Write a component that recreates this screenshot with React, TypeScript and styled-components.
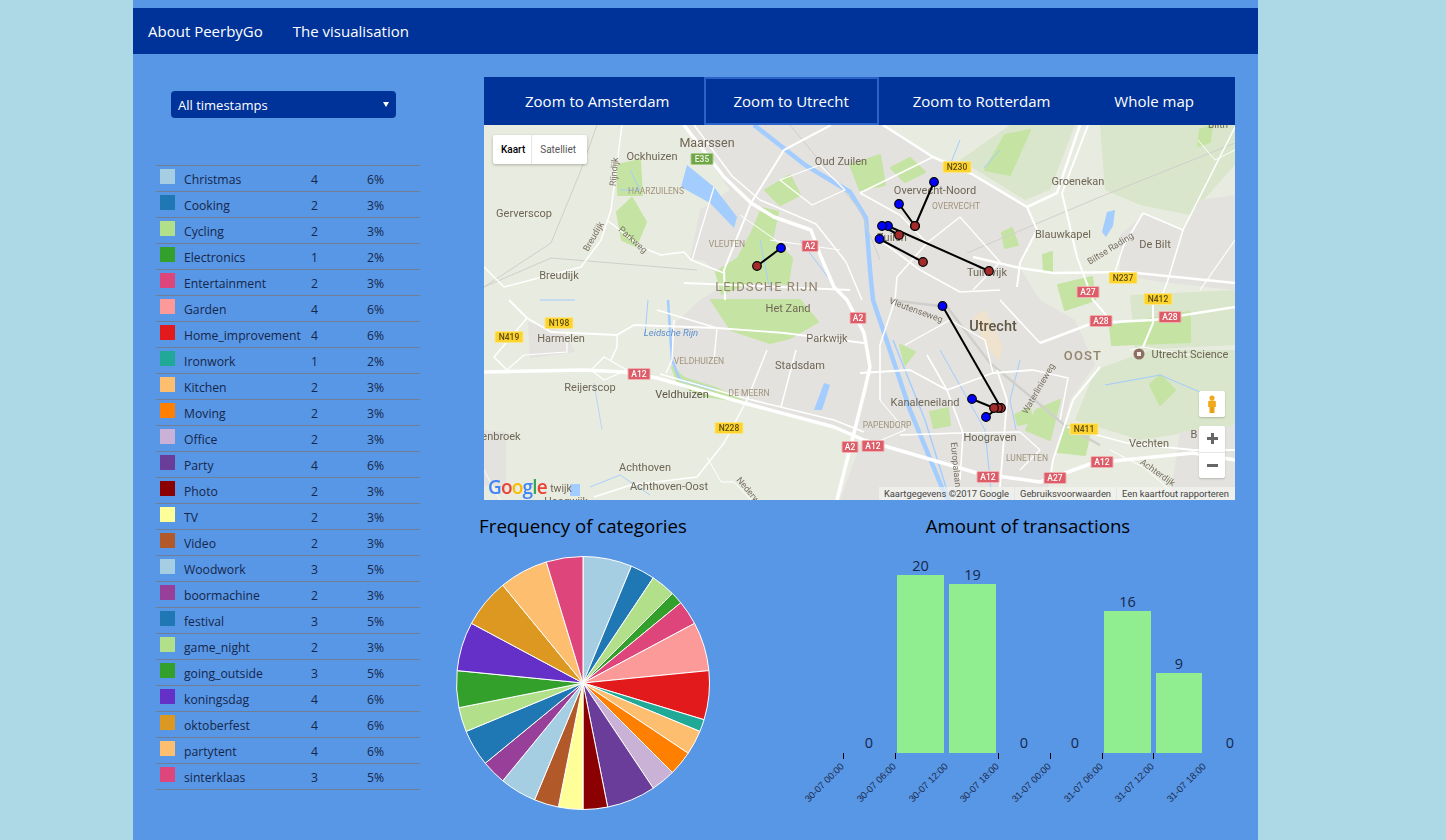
import React from 'react';
import styled, { createGlobalStyle } from 'styled-components';

const FONT = `'Open Sans', 'Noto Sans', sans-serif`;
const INK = '#16264a';

const CATEGORIES = [
    { name: 'Christmas', count: 4, share: 6, colour: '#a6cee3' },
    { name: 'Cooking', count: 2, share: 3, colour: '#1f78b4' },
    { name: 'Cycling', count: 2, share: 3, colour: '#b2df8a' },
    { name: 'Electronics', count: 1, share: 2, colour: '#33a02c' },
    { name: 'Entertainment', count: 2, share: 3, colour: '#de467b' },
    { name: 'Garden', count: 4, share: 6, colour: '#fb9a99' },
    { name: 'Home_improvement', count: 4, share: 6, colour: '#e31a1c' },
    { name: 'Ironwork', count: 1, share: 2, colour: '#1fa996' },
    { name: 'Kitchen', count: 2, share: 3, colour: '#fdbf6f' },
    { name: 'Moving', count: 2, share: 3, colour: '#ff7f00' },
    { name: 'Office', count: 2, share: 3, colour: '#cab2d6' },
    { name: 'Party', count: 4, share: 6, colour: '#6a3d9a' },
    { name: 'Photo', count: 2, share: 3, colour: '#8b0000' },
    { name: 'TV', count: 2, share: 3, colour: '#ffff99' },
    { name: 'Video', count: 2, share: 3, colour: '#b15928' },
    { name: 'Woodwork', count: 3, share: 5, colour: '#a6cee3' },
    { name: 'boormachine', count: 2, share: 3, colour: '#984099' },
    { name: 'festival', count: 3, share: 5, colour: '#1f78b4' },
    { name: 'game_night', count: 2, share: 3, colour: '#b2df8a' },
    { name: 'going_outside', count: 3, share: 5, colour: '#33a02c' },
    { name: 'koningsdag', count: 4, share: 6, colour: '#6530c8' },
    { name: 'oktoberfest', count: 4, share: 6, colour: '#dc9820' },
    { name: 'partytent', count: 4, share: 6, colour: '#fdbf6f' },
    { name: 'sinterklaas', count: 3, share: 5, colour: '#de467b' },
];

// map shapes are written in page pixels, the svg viewBox maps them onto the panel
const CITY_AREAS: string[] = [
    'M684 125 L883 125 L933 157 L970 173 L1027 207 L1037 230 L1020 268 L1040 300 L1075 320 L1095 365 L1070 400 L1052 470 L1045 500 L840 500 L862 440 L830 425 L744 403 L700 385 L672 372 L668 330 L700 300 L724 285 L706 262 L690 258 L700 210 L730 190 Z',
    'M1120 235 L1145 214 L1184 230 L1200 200 L1235 195 L1235 290 L1160 282 L1120 275 Z',
    'M484 430 L506 432 L506 490 L484 485 Z',
    'M528 322 L565 332 L575 352 L530 358 Z',
    'M1180 432 L1235 425 L1235 500 L1170 500 Z',
];

const SOFT_GREENS: string[] = [
    'M1100 125 L1235 125 L1235 165 L1190 215 L1140 205 L1105 190 Z',
    'M960 160 L1010 125 L1075 125 L1050 190 L1025 200 Z',
    'M1095 370 L1150 350 L1235 350 L1235 425 L1140 440 L1075 420 Z',
    'M1130 295 L1235 290 L1235 345 L1135 350 Z',
];

const GREENS: string[] = [
    'M752 232 L762 208 L778 212 L772 240 L792 258 L788 284 L750 282 L722 294 L716 272 L738 258 Z',
    'M711 300 L800 300 L818 322 L790 338 L770 343 L731 330 Z',
    'M617 212 L632 198 L646 222 L636 246 L622 240 Z',
    'M617 165 L640 160 L642 195 L618 195 Z',
    'M672 367 L684 378 L716 388 L745 402 L705 396 L678 384 Z',
    'M891 168 L910 158 L925 172 L905 182 Z',
    'M985 170 L1005 135 L1030 130 L1010 175 Z',
    'M1110 326 L1190 312 L1190 342 L1112 345 Z',
    'M1036 410 L1060 400 L1050 440 L1026 430 Z',
    'M1064 425 L1090 432 L1085 455 L1058 452 Z',
    'M1150 385 L1160 375 L1175 390 L1160 405 Z',
    'M1002 233 L1012 228 L1018 245 L1005 248 Z',
    'M1043 255 L1052 252 L1052 272 L1044 272 Z',
    'M1058 285 L1092 277 L1095 300 L1065 310 Z',
    'M900 345 L915 352 L905 365 Z',
    'M930 412 L948 408 L950 425 L934 428 Z',
    'M1015 415 L1030 408 L1032 422 L1018 425 Z',
    'M1200 130 L1212 125 L1210 142 L1198 146 Z',
    'M765 190 L790 175 L800 195 L780 205 Z',
    'M850 165 L880 155 L885 185 L860 190 Z',
];

const WATERS: string[] = [
    'M681 187 L687 165 L714 187 L737 217 L734 228 L710 203 Z',
    'M1102 232 L1107 212 L1115 210 L1113 226 L1106 237 Z',
    'M824 383 L830 385 L822 410 L814 410 Z',
    'M570 484 L580 484 L580 496 L570 496 Z',
    'M1010 320 L1010 320 Z',
];

const CANALS: [string, number][] = [
    ['M754 125 L805 165 L850 192 L866 218 L870 270 L873 300 L910 410 L943 490 L948 500', 4.5],
    ['M668 300 L672 360 L680 380 L716 390', 2.5],
    ['M594 383 L602 430', 0.7],
    ['M893 340 L925 420 L950 500', 1.4],
    ['M940 350 L985 430 L992 500', 1],
    ['M1105 385 L1160 375 L1200 392', 1],
    ['M590 487 L620 475 L650 495', 0.9],
    ['M540 300 L575 300', 1],
    ['M648 300 L645 335', 1],
    ['M620 190 L640 190 L630 170', 1],
    ['M760 240 L770 290', 1],
    ['M800 240 L830 280', 1],
    ['M1020 360 L1010 400 L1016 430', 1],
    ['M960 140 L950 165', 1],
    ['M984 168 L1000 150', 1],
];

const RAILS: [string, number][] = [
    ['M597 125 L581 170 L551 243 L484 287', 1],
    ['M484 287 L551 258 L697 270', 1],
    ['M967 253 L1100 197 L1235 143', 1],
    ['M890 300 L947 307 L990 363 L1067 427 L1100 445', 2.5],
    ['M790 125 L860 210 L880 260', 1],
];

const ROADS: [string, number][] = [
    // A12
    ['M484 372 L584 370 L624 372 L657 378 L744 403 L834 427 L864 440 L977 473 L1040 482 L1093 463 L1193 453 L1235 460', 3.5],
    ['M660 374 L744 398 L834 420 L864 432', 1.5],
    // A2
    ['M684 125 L724 177 L751 203 L774 217 L811 230 L821 257 L834 287 L847 300 L864 333 L870 367 L864 393 L837 500', 3.5],
    ['M694 125 L732 176 L760 200 L816 224 L846 262 L862 300', 1.5],
    // ring and provincial roads
    ['M831 125 L784 150 L751 203 L724 270 L725 300', 2],
    ['M883 125 L933 157 L970 173 L1027 207 L1057 193 L1080 125', 2.5],
    ['M1088 125 L1062 193 L1077 257 L1093 300 L1113 323', 2],
    ['M933 157 L860 193', 1.6],
    ['M1027 207 L1037 230 L1020 263 L1017 287', 2],
    ['M973 257 L1020 268 L1053 273 L1127 272 L1235 283', 2.5],
    ['M1040 343 L1093 323 L1153 320 L1235 307', 2.5],
    ['M1153 300 L1153 323 L1143 347', 2],
    ['M1100 367 L1073 400 L1053 460 L1050 480', 2],
    ['M1067 427 L1127 443 L1193 450 L1235 450', 1.8],
    ['M1235 127 L1183 230 L1167 283 L1160 300', 1.6],
    ['M1143 213 L1183 230', 1.6],
    ['M1143 213 L1123 247 L1115 272', 1.6],
    ['M1235 240 L1200 290', 1.2],
    // west of the city
    ['M622 125 L611 210 L601 240 L581 267 L504 287 L484 267', 1.5],
    ['M607 220 L641 247 L661 255 L684 252 L691 260 L724 273', 1.5],
    ['M714 187 L701 230 L692 260', 1.3],
    ['M684 283 L850 290', 1.8],
    ['M509 300 L527 318 L551 332 L617 335 L634 325 L717 328 L784 333 L864 343', 1.8],
    ['M527 318 L494 357 L507 370', 1.5],
    ['M507 370 L524 355 L567 352 L567 333', 1.2],
    ['M617 335 L617 347 L611 360', 1.5],
    ['M591 370 L604 357 L627 370 L604 380 Z', 1.3],
    ['M674 320 L672 360 L666 373', 1.4],
    ['M657 310 L717 328 L714 360', 1.4],
    ['M767 350 L747 400 L724 443 L697 477 L631 485 L594 497', 1.5],
    ['M707 457 L721 482 L734 482 L751 500', 1],
    ['M796 350 L781 407', 1.5],
    ['M484 470 L500 500', 0.8],
    // city grid
    ['M860 193 L900 215 L927 243 L960 217', 1.5],
    ['M927 243 L897 277 L895 300 L880 345 L880 400', 1.6],
    ['M960 217 L1000 262 L973 290', 1.4],
    ['M880 240 L920 270 L960 292 L1000 290', 1.6],
    ['M860 373 L910 370 L947 390 L993 373 L1033 370', 1.8],
    ['M927 355 L947 390 L963 433 L960 480', 1.6],
    ['M997 370 L1007 400 L1000 487', 1.8],
    ['M905 345 L950 320 L985 340 L993 373', 1.4],
    ['M900 435 L960 433 L1020 432 L1040 450 L1020 470', 1.3],
    ['M1033 370 L1068 378 L1060 420', 1.4],
    ['M1000 300 L1040 343', 1.6],
    ['M880 400 L905 430 L870 445', 1.1],
    ['M780 180 L820 165 L845 190 L812 205 Z', 1.3],
    ['M770 240 L840 250', 1],
    ['M740 215 L790 250', 1],
    ['M1198 140 L1215 160 L1235 150', 1],
    ['M1130 350 L1143 347 L1190 355', 1],
    ['M1110 450 L1145 468 L1170 490', 1],
];

const MAP_LABELS = [
    { x: 707, y: 147, text: 'Maarssen', size: 12.5, colour: '#6f6656' },
    { x: 652, y: 160, text: 'Ockhuizen', size: 11, colour: '#6f6656' },
    { x: 841, y: 165, text: 'Oud Zuilen', size: 11, colour: '#6f6656' },
    { x: 656, y: 194, text: 'HAARZUILENS', size: 8.5, colour: '#a1937d' },
    { x: 524, y: 217, text: 'Gerverscop', size: 11, colour: '#6f6656' },
    { x: 559, y: 279, text: 'Breudijk', size: 11, colour: '#6f6656' },
    { x: 727, y: 247, text: 'VLEUTEN', size: 8.5, colour: '#a1937d' },
    { x: 767, y: 291, text: 'LEIDSCHE RIJN', size: 13, colour: '#94856c', spacing: 1 },
    { x: 788, y: 312, text: 'Het Zand', size: 11, colour: '#6f6656' },
    { x: 561, y: 342, text: 'Harmelen', size: 11, colour: '#6f6656' },
    { x: 671, y: 336, text: 'Leidsche Rijn', size: 9.5, colour: '#5d8fd0', italic: true },
    { x: 827, y: 342, text: 'Parkwijk', size: 11, colour: '#6f6656' },
    { x: 699, y: 364, text: 'VELDHUIZEN', size: 8.5, colour: '#a1937d' },
    { x: 800, y: 369, text: 'Stadsdam', size: 11, colour: '#6f6656' },
    { x: 590, y: 391, text: 'Reijerscop', size: 11, colour: '#6f6656' },
    { x: 682, y: 398, text: 'Veldhuizen', size: 11, colour: '#5f5747' },
    { x: 749, y: 396, text: 'DE MEERN', size: 8.5, colour: '#a1937d' },
    { x: 501, y: 440, text: 'enbroek', size: 11, colour: '#6f6656' },
    { x: 645, y: 471, text: 'Achthoven', size: 11, colour: '#6f6656' },
    { x: 669, y: 490, text: 'Achthoven-Oost', size: 11, colour: '#6f6656' },
    { x: 561, y: 492, text: 'twijk', size: 10.5, colour: '#6f6656' },
    { x: 566, y: 505, text: 'Hoogwijk', size: 10.5, colour: '#6f6656' },
    { x: 935, y: 194, text: 'Overvecht-Noord', size: 11, colour: '#6f6656' },
    { x: 956, y: 209, text: 'OVERVECHT', size: 8.5, colour: '#a1937d' },
    { x: 1078, y: 185, text: 'Groenekan', size: 11, colour: '#6f6656' },
    { x: 1063, y: 238, text: 'Blauwkapel', size: 11, colour: '#6f6656' },
    { x: 1155, y: 248, text: 'De Bilt', size: 11, colour: '#6f6656' },
    { x: 892, y: 241, text: 'Zuilen', size: 11, colour: '#6f6656' },
    { x: 987, y: 276, text: 'Tuinwijk', size: 11, colour: '#6f6656' },
    { x: 993, y: 331, text: 'Utrecht', size: 14.5, colour: '#5f5747', bold: true },
    { x: 1083, y: 360, text: 'OOST', size: 13, colour: '#94856c', spacing: 1.2, bold: true },
    { x: 1190, y: 358, text: 'Utrecht Science', size: 11, colour: '#6f6656' },
    { x: 925, y: 406, text: 'Kanaleneiland', size: 11, colour: '#6f6656' },
    { x: 887, y: 428, text: 'PAPENDORP', size: 8.5, colour: '#a1937d' },
    { x: 990, y: 441, text: 'Hoograven', size: 11, colour: '#6f6656' },
    { x: 1027, y: 461, text: 'LUNETTEN', size: 8.5, colour: '#a1937d' },
    { x: 1149, y: 447, text: 'Vechten', size: 11, colour: '#6f6656' },
    { x: 1194, y: 438, text: 'B', size: 11, colour: '#6f6656' },
    { x: 1218, y: 128, text: 'Bilth', size: 10, colour: '#6f6656' },
];

const ROAD_LABELS = [
    { x: 617, y: 172, angle: -85, text: 'Rijndijk' },
    { x: 596, y: 238, angle: -60, text: 'Breudijk' },
    { x: 631, y: 242, angle: 42, text: 'Parkweg' },
    { x: 1112, y: 251, angle: -32, text: 'Biltse Rading' },
    { x: 915, y: 313, angle: 20, text: 'Vleutenseweg' },
    { x: 1041, y: 390, angle: -60, text: 'Waterlinieweg' },
    { x: 953, y: 465, angle: 84, text: 'Europalaan' },
    { x: 1156, y: 475, angle: 35, text: 'Achterdijk' },
    { x: 746, y: 492, angle: 50, text: 'Nederw' },
];

const SHIELDS = [
    { x: 702, y: 159, text: 'E35', kind: 'green' },
    { x: 810, y: 246, text: 'A2', kind: 'red' },
    { x: 858, y: 318, text: 'A2', kind: 'red' },
    { x: 850, y: 447, text: 'A2', kind: 'red' },
    { x: 873, y: 446, text: 'A12', kind: 'red' },
    { x: 639, y: 374, text: 'A12', kind: 'red' },
    { x: 988, y: 477, text: 'A12', kind: 'red' },
    { x: 1102, y: 462, text: 'A12', kind: 'red' },
    { x: 1055, y: 478, text: 'A27', kind: 'red' },
    { x: 1088, y: 292, text: 'A27', kind: 'red' },
    { x: 1101, y: 321, text: 'A28', kind: 'red' },
    { x: 1170, y: 317, text: 'A28', kind: 'red' },
    { x: 957, y: 167, text: 'N230', kind: 'yellow' },
    { x: 1123, y: 278, text: 'N237', kind: 'yellow' },
    { x: 1158, y: 299, text: 'N412', kind: 'yellow' },
    { x: 1084, y: 429, text: 'N411', kind: 'yellow' },
    { x: 729, y: 428, text: 'N228', kind: 'yellow' },
    { x: 559, y: 323, text: 'N198', kind: 'yellow' },
    { x: 509, y: 337, text: 'N419', kind: 'yellow' },
];

const SHIELD_COLOURS: Record<string, [string, string, string]> = {
    green: ['#6ea544', '#a9cc8d', '#eef5e6'],
    red: ['#dc5d67', '#f0b0b4', '#ffffff'],
    yellow: ['#fdd42f', '#fbe58c', '#5c4b10'],
};

const ROUTES = [
    { from: [781, 248], to: [757, 266] },
    { from: [934, 182], to: [915, 226] },
    { from: [899, 204], to: [915, 226] },
    { from: [888, 226], to: [989, 271] },
    { from: [882, 226], to: [899, 235] },
    { from: [879.5, 239], to: [923, 262] },
    { from: [942.5, 306], to: [1001, 408] },
    { from: [986, 417], to: [998, 408] },
    { from: [972, 399], to: [994, 408] },
];

const BARS = [
    { x: 897, y: 575, width: 47, value: 20 },
    { x: 949, y: 584, width: 47, value: 19 },
    { x: 1104, y: 611, width: 47, value: 16 },
    { x: 1156, y: 673, width: 46, value: 9 },
];

const ZERO_LABELS = [869, 1024, 1075, 1230];

const TICKS = [
    { x: 843.5, text: '30-07 00:00', mark: true },
    { x: 895.5, text: '30-07 06:00', mark: true },
    { x: 947.5, text: '30-07 12:00', mark: false },
    { x: 998.5, text: '30-07 18:00', mark: true },
    { x: 1050.5, text: '31-07 00:00', mark: true },
    { x: 1102.5, text: '31-07 06:00', mark: true },
    { x: 1153.5, text: '31-07 12:00', mark: true },
    { x: 1205.5, text: '31-07 18:00', mark: false },
];

const slicePath = (start: number, end: number) => {
    const [cx, cy, r] = [583, 683, 126.5];
    const point = (turn: number) => {
        const a = turn * 2 * Math.PI;
        return `${(cx + r * Math.sin(a)).toFixed(2)} ${(cy - r * Math.cos(a)).toFixed(2)}`;
    };
    return `M${cx} ${cy} L${point(start)} A${r} ${r} 0 0 1 ${point(end)} Z`;
};

const PieChart: React.FC = () => {
    const total = CATEGORIES.reduce((sum, c) => sum + c.count, 0);
    let turned = 0;
    return (
        <PieDrawing viewBox="440 545 286 270">
            {CATEGORIES.map(category => {
                const start = turned;
                turned += category.count / total;
                return (
                    <path
                        key={category.name}
                        d={slicePath(start, turned)}
                        fill={category.colour}
                        stroke="#fff"
                        strokeWidth="1"
                    />
                );
            })}
        </PieDrawing>
    );
};

const BarChart: React.FC = () => (
    <BarDrawing viewBox="800 545 456 270">
        {BARS.map(bar => (
            <g key={bar.x}>
                <rect x={bar.x} y={bar.y} width={bar.width} height={753 - bar.y} fill="#90ee90" />
                <BarValue x={bar.x + bar.width / 2} y={bar.y - 4}>{bar.value}</BarValue>
            </g>
        ))}
        {ZERO_LABELS.map(x => (
            <BarValue key={x} x={x} y={748}>0</BarValue>
        ))}
        {TICKS.map(tick => (
            <g key={tick.text}>
                {tick.mark ? <line x1={tick.x} x2={tick.x} y1="753" y2="759" stroke="#000" /> : null}
                <TickLabel
                    x={tick.x + 1}
                    y={767}
                    transform={`rotate(-45 ${tick.x + 1} 767)`}
                >
                    {tick.text}
                </TickLabel>
            </g>
        ))}
    </BarDrawing>
);

const MapDrawing: React.FC = () => (
    <MapSvg viewBox="484 125 751 375">
        <defs>
            <filter id="soft">
                <feGaussianBlur stdDeviation="0.5" />
            </filter>
            <filter id="softer">
                <feGaussianBlur stdDeviation="0.25" />
            </filter>
        </defs>
        <rect x="484" y="125" width="751" height="375" fill="#e8ebdf" />
        <g filter="url(#soft)">
            {SOFT_GREENS.map(d => <path key={d} d={d} fill="#d9e6cb" />)}
            {CITY_AREAS.map(d => <path key={d} d={d} fill="#e3e2df" />)}
            <path d="M973 317 L985 310 L1002 345 L1000 362 L985 345 Z" fill="#f0e3cd" />
            <path d="M1150 327 L1160 325 L1160 340 L1148 340 Z" fill="#f7dfe3" />
            {GREENS.map(d => <path key={d} d={d} fill="#c5e4a3" strokeLinejoin="round" stroke="#c5e4a3" strokeWidth="2" />)}
            {WATERS.map(d => <path key={d} d={d} fill="#a3ccff" />)}
            {CANALS.map(([d, width]) => (
                <path key={d} d={d} fill="none" stroke="#a3ccff" strokeWidth={width} />
            ))}
            {RAILS.map(([d, width]) => (
                <path key={d} d={d} fill="none" stroke="#cfcfcb" strokeWidth={width} />
            ))}
            {ROADS.map(([d, width]) => (
                <path key={d} d={d} fill="none" stroke="#fff" strokeWidth={width} strokeLinejoin="round" />
            ))}
        </g>
        <g filter="url(#softer)">
            {MAP_LABELS.map(label => (
                <MapLabel
                    key={label.text + label.x}
                    x={label.x}
                    y={label.y}
                    fontSize={label.size}
                    fill={label.colour}
                    fontStyle={label.italic ? 'italic' : 'normal'}
                    fontWeight={label.bold ? 500 : 400}
                    letterSpacing={label.spacing ?? 0}
                >
                    {label.text}
                </MapLabel>
            ))}
            {ROAD_LABELS.map(label => (
                <MapLabel
                    key={label.text}
                    x={label.x}
                    y={label.y}
                    fontSize="9"
                    fill="#7a7164"
                    transform={`rotate(${label.angle} ${label.x} ${label.y})`}
                >
                    {label.text}
                </MapLabel>
            ))}
            {SHIELDS.map(shield => {
                const [fill, edge, ink] = SHIELD_COLOURS[shield.kind];
                const width = shield.text.length * 6 + 4;
                return (
                    <g key={shield.text + shield.x}>
                        <rect
                            x={shield.x - width / 2}
                            y={shield.y - 5.5}
                            width={width}
                            height="11"
                            rx="1"
                            fill={fill}
                            stroke={edge}
                        />
                        <MapLabel x={shield.x} y={shield.y + 3} fontSize="8.5" fontWeight={500} fill={ink}>
                            {shield.text}
                        </MapLabel>
                    </g>
                );
            })}
            <circle cx="1139" cy="354" r="5.5" fill="#8d6e63" />
            <rect x="1137" y="352" width="4" height="4" fill="#f5eee8" />
            <GoogleMark x="488" y="494">
                <tspan fill="#4285f4">G</tspan>
                <tspan fill="#ea4335">o</tspan>
                <tspan fill="#fbbc05">o</tspan>
                <tspan fill="#4285f4">g</tspan>
                <tspan fill="#34a853">l</tspan>
                <tspan fill="#ea4335">e</tspan>
            </GoogleMark>
        </g>
        {ROUTES.map(route => (
            <line
                key={route.from.join()}
                x1={route.from[0]}
                y1={route.from[1]}
                x2={route.to[0]}
                y2={route.to[1]}
                stroke="#000"
                strokeWidth="2"
            />
        ))}
        {ROUTES.map(route => (
            <g key={route.to.join() + route.from.join()}>
                <circle cx={route.to[0]} cy={route.to[1]} r="4.3" fill="#a52a2a" stroke="#000" strokeWidth="1.2" />
                <circle cx={route.from[0]} cy={route.from[1]} r="4.3" fill="#0000ff" stroke="#000" strokeWidth="1.2" />
            </g>
        ))}
    </MapSvg>
);

export default function App() {
    return (
        <>
            <GlobalStyle />
            <Page>
                <NavBar>
                    <NavLink>About PeerbyGo</NavLink>
                    <NavLink>The visualisation</NavLink>
                </NavBar>
                <Content>
                    <Sidebar>
                        <TimeSelect>All timestamps</TimeSelect>
                        <Legend>
                            {CATEGORIES.map(category => (
                                <LegendRow key={category.name}>
                                    <Swatch $colour={category.colour} />
                                    <span>{category.name}</span>
                                    <span>{category.count}</span>
                                    <span>{category.share}%</span>
                                </LegendRow>
                            ))}
                        </Legend>
                    </Sidebar>
                    <MainColumn>
                        <MapPanel>
                            <ZoomTabs>
                                <ZoomTab>Zoom to Amsterdam</ZoomTab>
                                <ZoomTab $active>Zoom to Utrecht</ZoomTab>
                                <ZoomTab>Zoom to Rotterdam</ZoomTab>
                                <ZoomTab>Whole map</ZoomTab>
                            </ZoomTabs>
                            <MapFrame>
                                <MapDrawing />
                                <MapTypeControl>
                                    <MapType $selected>Kaart</MapType>
                                    <MapType>Satelliet</MapType>
                                </MapTypeControl>
                                <MapButtons>
                                    <PegmanButton>
                                        <svg width="12" height="19" viewBox="0 0 14 22">
                                            <circle cx="7" cy="3.5" r="3" fill="#f0a81c" />
                                            <path d="M2.5 8 Q2.5 6.5 4 6.5 H10 Q11.5 6.5 11.5 8 V14 H10 V21 H4 V14 H2.5 Z" fill="#f0a81c" />
                                            <path d="M7 14 V21" stroke="#c98a10" strokeWidth="0.8" />
                                        </svg>
                                    </PegmanButton>
                                    <ZoomButtons>
                                        <ZoomButton>
                                            <svg width="11" height="11" viewBox="0 0 11 11"><path d="M4 0h3v4h4v3H7v4H4V7H0V4h4z" fill="#666" /></svg>
                                        </ZoomButton>
                                        <ZoomButton>
                                            <svg width="11" height="3" viewBox="0 0 11 3"><path d="M0 0h11v3H0z" fill="#666" /></svg>
                                        </ZoomButton>
                                    </ZoomButtons>
                                </MapButtons>
                                <Attribution>
                                    <AttributionItem>Kaartgegevens ©2017 Google</AttributionItem>
                                    <AttributionItem>Gebruiksvoorwaarden</AttributionItem>
                                    <AttributionItem>Een kaartfout rapporteren</AttributionItem>
                                </Attribution>
                            </MapFrame>
                        </MapPanel>
                        <ChartRow>
                            <PieColumn>
                                <ChartTitle>Frequency of categories</ChartTitle>
                                <PieChart />
                            </PieColumn>
                            <BarColumn>
                                <ChartTitle>Amount of transactions</ChartTitle>
                                <BarChart />
                            </BarColumn>
                        </ChartRow>
                    </MainColumn>
                </Content>
            </Page>
        </>
    );
}

const GlobalStyle = createGlobalStyle`
    html, body {
        margin: 0;
        background: #add8e6;
        font-family: ${FONT};
    }
`;

const Page = styled.div`
    width: 1125px;
    height: 840px;
    margin-left: 133px;
    padding-top: 8px;
    box-sizing: border-box;
    background: #5897e6;
    overflow: hidden;
`;

const NavBar = styled.nav`
    display: flex;
    align-items: center;
    gap: 30px;
    height: 46px;
    padding-left: 15px;
    background: #003399;
`;

const NavLink = styled.a`
    color: #fff;
    font-size: 15px;
`;

const Content = styled.div`
    display: flex;
    padding-top: 23px;
`;

const Sidebar = styled.aside`
    display: flex;
    flex-direction: column;
    width: 307px;
    padding-left: 23px;
    box-sizing: border-box;
`;

const TimeSelect = styled.div`
    position: relative;
    width: 225px;
    height: 27px;
    margin: 14px 0 47px 15px;
    padding-left: 7px;
    box-sizing: border-box;
    border-radius: 4px;
    background: #003399;
    color: #fff;
    font-size: 13px;
    line-height: 28px;

    &::after {
        content: '';
        position: absolute;
        top: 11px;
        right: 7px;
        border-style: solid;
        border-width: 5px 3px 0;
        border-color: #fff transparent transparent;
    }
`;

const Legend = styled.div`
    width: 264px;
    border-bottom: 1px solid #6f7d96;
`;

const LegendRow = styled.div`
    display: grid;
    grid-template-columns: 24px 127px 56px 1fr;
    height: 26px;
    padding: 5px 0 0 4px;
    box-sizing: border-box;
    border-top: 1px solid #6f7d96;
    color: ${INK};
    font-size: 12.2px;
    line-height: 18px;
`;

const Swatch = styled.i<{ $colour: string }>`
    width: 15px;
    height: 15px;
    margin-top: -2px;
    background: ${props => props.$colour};
`;

const MainColumn = styled.main`
    display: flex;
    flex-direction: column;
    width: 818px;
`;

const MapPanel = styled.section`
    width: 751px;
    margin-left: 44px;
`;

const ZoomTabs = styled.div`
    display: flex;
    gap: 4px;
    height: 48px;
    padding-left: 11px;
    background: #003399;
`;

const ZoomTab = styled.a<{ $active?: boolean }>`
    display: flex;
    align-items: center;
    padding: 0 28px;
    border: 2px solid ${props => (props.$active ? '#2a62c8' : 'transparent')};
    color: #fff;
    font-size: 15px;
`;

const MapFrame = styled.div`
    position: relative;
    height: 375px;
    overflow: hidden;
`;

const MapSvg = styled.svg`
    display: block;
    width: 751px;
    height: 375px;
`;

const MapLabel = styled.text`
    font-family: Roboto, 'Liberation Sans', sans-serif;
    text-anchor: middle;
`;

const GoogleMark = styled.text`
    font-family: 'Open Sans', 'Liberation Sans', sans-serif;
    font-size: 19px;
    font-weight: 600;
    letter-spacing: -0.8px;
`;

const MapTypeControl = styled.div`
    position: absolute;
    top: 10px;
    left: 9px;
    display: flex;
    height: 29px;
    border-radius: 2px;
    background: #fff;
    box-shadow: 0 1px 3px rgba(0, 0, 0, 0.25);
`;

const MapType = styled.span<{ $selected?: boolean }>`
    display: flex;
    align-items: center;
    padding: ${props => (props.$selected ? '0 6px 0 8px' : '0 11px 0 8px')};
    border-right: 1px solid #e6e6e6;
    color: ${props => (props.$selected ? '#000' : '#565656')};
    font-family: Roboto, 'Liberation Sans', sans-serif;
    font-size: 10px;
    font-weight: ${props => (props.$selected ? 500 : 400)};

    &:last-child {
        border-right: 0;
    }
`;

const MapButtons = styled.div`
    position: absolute;
    top: 266px;
    right: 10px;
    display: flex;
    flex-direction: column;
    gap: 9px;
    width: 26px;
`;

const PegmanButton = styled.div`
    display: flex;
    align-items: center;
    justify-content: center;
    height: 26px;
    border-radius: 2px;
    background: #fff;
    box-shadow: 0 1px 2px rgba(0, 0, 0, 0.2);
`;

const ZoomButtons = styled.div`
    display: flex;
    flex-direction: column;
    height: 52px;
    border-radius: 2px;
    background: #fff;
    box-shadow: 0 1px 2px rgba(0, 0, 0, 0.2);
`;

const ZoomButton = styled.div`
    display: flex;
    flex: 1;
    align-items: center;
    justify-content: center;

    & + & {
        border-top: 1px solid #e6e6e6;
    }
`;

const Attribution = styled.div`
    position: absolute;
    right: 0;
    bottom: 0;
    display: flex;
    height: 13px;
    background: rgba(245, 245, 240, 0.65);
    color: #444;
    font-family: Roboto, 'Liberation Sans', sans-serif;
    font-size: 9.4px;
    line-height: 14px;
`;

const AttributionItem = styled.span`
    padding: 0 5px;
    border-right: 1px solid #e2e6e8;

    &:last-child {
        border-right: 0;
        padding-right: 6px;
    }
`;

const ChartRow = styled.div`
    display: flex;
    gap: 74px;
`;

const PieColumn = styled.section`
    width: 286px;
`;

const BarColumn = styled.section`
    width: 456px;
`;

const ChartTitle = styled.h2`
    height: 45px;
    margin: 0;
    color: #000;
    font-size: 18.7px;
    font-weight: 400;
    line-height: 52px;
    text-align: center;
    white-space: nowrap;
`;

const PieDrawing = styled.svg`
    display: block;
    width: 286px;
    height: 270px;
`;

const BarDrawing = styled.svg`
    display: block;
    width: 456px;
    height: 270px;
`;

const BarValue = styled.text`
    fill: ${INK};
    font-family: ${FONT};
    font-size: 14.5px;
    text-anchor: middle;
`;

const TickLabel = styled.text`
    fill: #1d2b4d;
    font-family: 'Liberation Sans', Arial, sans-serif;
    font-size: 9.5px;
    text-anchor: end;
`;
